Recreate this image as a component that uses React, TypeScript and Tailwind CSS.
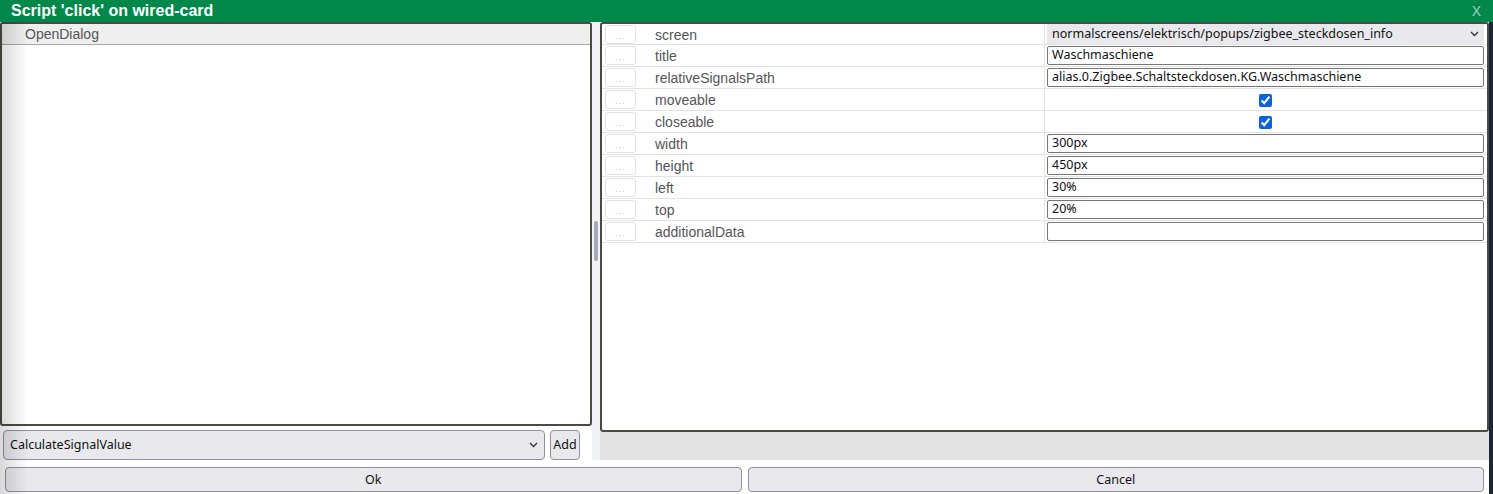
import React from 'react';

type Row = { name: string; kind: 'select' | 'text' | 'check'; value?: string };

const rows: Row[] = [
  { name: 'screen', kind: 'select', value: 'normalscreens/elektrisch/popups/zigbee_steckdosen_info' },
  { name: 'title', kind: 'text', value: 'Waschmaschiene' },
  { name: 'relativeSignalsPath', kind: 'text', value: 'alias.0.Zigbee.Schaltsteckdosen.KG.Waschmaschiene' },
  { name: 'moveable', kind: 'check' },
  { name: 'closeable', kind: 'check' },
  { name: 'width', kind: 'text', value: '300px' },
  { name: 'height', kind: 'text', value: '450px' },
  { name: 'left', kind: 'text', value: '30%' },
  { name: 'top', kind: 'text', value: '20%' },
  { name: 'additionalData', kind: 'text', value: '' },
];

function Chevron() {
  return (
    <svg width="9" height="6" viewBox="0 0 9 6" className="shrink-0">
      <path d="M1 1l3.5 3.5L8 1" fill="none" stroke="#333" strokeWidth="1.3" />
    </svg>
  );
}

function PropRow({ row, first }: { row: Row; first: boolean }) {
  return (
    <div className={`flex ${first ? 'h-[21px]' : 'h-[22px]'} border-b border-[#e3e3e3]`}>
      <div className="w-[442px] flex items-center shrink-0">
        <div className="ml-[3px] w-[31px] h-[19px] border border-[#e2e2e2] rounded-[3px] flex items-end justify-center pb-[2px] text-[8px] leading-none text-[#b5b5b5] tracking-[1.5px]">
          ...
        </div>
        <div className="ml-[19px] pt-[2px] text-[14px] text-[#555]">{row.name}</div>
      </div>
      <div className="flex-1 border-l border-[#e3e3e3] flex items-center pl-[2px] pr-[3px] font-['Noto_Sans',sans-serif] text-[12.5px] text-[#111]">
        {row.kind === 'select' && (
          <div className="w-full h-[20px] bg-[#e9e9ed] flex items-center justify-between pl-[5px] pr-[5px]">
            <span>{row.value}</span>
            <Chevron />
          </div>
        )}
        {row.kind === 'text' && (
          <div className="w-full h-[19px] border border-[#767676] rounded-[2px] bg-white flex items-center pl-[4px]">
            {row.value}
          </div>
        )}
        {row.kind === 'check' && (
          <div className="w-full flex justify-center pt-[1px]">
            <input type="checkbox" checked readOnly className="w-[13px] h-[13px] accent-[#0b63d8] m-0" />
          </div>
        )}
      </div>
    </div>
  );
}

export default function App() {
  return (
    <div className="relative w-[1493px] h-[494px] overflow-hidden bg-white font-['Liberation_Sans',Arial,sans-serif]">
      {/* title bar */}
      <div className="h-[22px] bg-[#00884b] flex items-center justify-between pl-[11px] pr-[12px]">
        <span className="text-white font-bold text-[16px] leading-none">Script 'click' on wired-card</span>
        <span className="text-[#9fd3b6] text-[14px] leading-none">X</span>
      </div>

      <div className="flex h-[472px]">
        <div className="flex-1 flex flex-col">
          <div className="flex">
            {/* left column */}
            <div className="w-[592px] flex flex-col">
              <div className="h-[404px] border-2 border-[#4d4a43] rounded-[3px] bg-white">
                <div className="h-[21px] bg-[#efefef] border-b border-[#a8a8a8] flex items-center pl-[23px] pt-[1px] text-[14px] text-[#555]">
                  OpenDialog
                </div>
              </div>
              <div className="flex items-center gap-[5px] mt-[4px] pl-[3px]">
                <div className="w-[542px] h-[30px] bg-[#e9e9ed] border border-[#8f8f9d] rounded-[4px] flex items-center justify-between pl-[6px] pr-[6px] font-['Noto_Sans',sans-serif] text-[12.5px] text-[#111]">
                  <span>CalculateSignalValue</span>
                  <Chevron />
                </div>
                <div className="w-[30px] h-[30px] bg-[#e9e9ed] border border-[#8f8f9d] rounded-[4px] flex items-center justify-center font-['Noto_Sans',sans-serif] text-[12.5px] text-[#111]">
                  Add
                </div>
              </div>
            </div>

            {/* splitter */}
            <div className="w-[8px] h-[438px] bg-[#f2f3f6] flex justify-center">
              <div className="w-[4px] h-[40px] mt-[199px] rounded-full bg-[#a3a9b8]" />
            </div>

            {/* right column */}
            <div className="flex-1 flex flex-col">
              <div className="h-[410px] border-2 border-[#4d4a43] rounded-[3px] bg-white">
                {rows.map((r, i) => (
                  <PropRow key={r.name} row={r} first={i === 0} />
                ))}
              </div>
              <div className="h-[28px] bg-[#e4e4e4]" />
            </div>
          </div>

          {/* dialog buttons */}
          <div className="flex gap-[6px] pl-[5px] pr-[5px] mt-[7px]">
            <div className="flex-1 h-[25px] bg-[#e9e9ed] border border-[#8f8f9d] rounded-[4px] flex items-center justify-center pt-[1px] font-['Noto_Sans',sans-serif] text-[12.5px] text-[#111]">
              Ok
            </div>
            <div className="flex-1 h-[25px] bg-[#e9e9ed] border border-[#8f8f9d] rounded-[4px] flex items-center justify-center pt-[1px] font-['Noto_Sans',sans-serif] text-[12.5px] text-[#111]">
              Cancel
            </div>
          </div>
        </div>
        <div className="w-[4px] bg-[#1c2634]" />
      </div>

      {/* shadow falling over the left edge */}
      <div className="pointer-events-none absolute left-0 top-[22px] bottom-0 w-[28px] bg-gradient-to-r from-black/15 to-transparent" />
    </div>
  );
}
